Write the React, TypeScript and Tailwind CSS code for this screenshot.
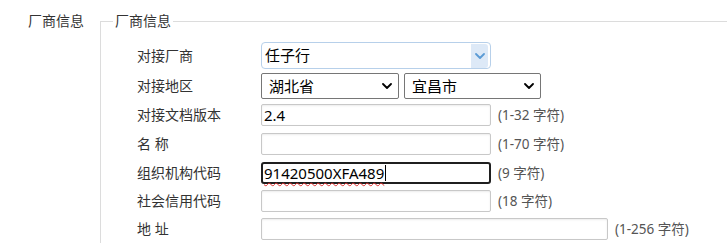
import type { PropsWithChildren } from "react";

const FONT = { fontFamily: '"Noto Sans", "Noto Sans CJK SC", sans-serif' };

function Chevron({ className }: { className?: string }) {
  return (
    <svg viewBox="0 0 10 6" className={className} fill="none">
      <path d="M1 1l4 4 4-4" stroke="currentColor" strokeWidth="1.8" strokeLinecap="round" strokeLinejoin="round" />
    </svg>
  );
}

function Row({ label, top, h, children }: PropsWithChildren<{ label: string; top: string; h: string }>) {
  return (
    <div className={`flex items-center ${top} ${h}`}>
      <div className="w-[160px] shrink-0 pl-[36px] text-[14px] leading-none text-[#333]">{label}</div>
      {children}
    </div>
  );
}

function TextInput({ value, width = "w-[230px]" }: { value?: string; width?: string }) {
  return (
    <div
      className={`flex h-full ${width} items-center rounded-[2px] border border-[#c8c8c8] px-[2px] text-[15px] text-black shadow-[inset_0_1px_2px_rgba(0,0,0,0.08)]`}
    >
      {value}
    </div>
  );
}

function Hint({ children }: PropsWithChildren) {
  return <span className="ml-[7px] text-[13.5px] text-[#555]">{children}</span>;
}

function NativeSelect({ value, width }: { value: string; width: string }) {
  return (
    <div
      className={`flex h-full ${width} items-center justify-between rounded-[2px] border border-[#767676] pl-[7px] pr-[6px] text-[15px] text-black`}
    >
      {value}
      <Chevron className="h-[6px] w-[10px] text-black" />
    </div>
  );
}

export default function App() {
  return (
    <div className="h-[243px] w-[727px] overflow-hidden bg-white" style={FONT}>
      <div className="flex pt-[14px]">
        <div className="w-[100px] shrink-0 pl-[28px] text-[14px] leading-[14px] text-[#333]">厂商信息</div>

        <div className="flex flex-1 flex-col">
          {/* legend line */}
          <div className="flex h-[14px] items-center">
            <div className="h-[7px] w-[13px] self-end border-l border-t border-[#dcdcdc]" />
            <span className="px-[2px] text-[14px] leading-none text-[#333]">厂商信息</span>
            <div className="flex-1 border-t border-[#dcdcdc]" />
          </div>

          <div className="flex flex-col border-l border-[#dcdcdc] pb-[10px]">
            <Row label="对接厂商" top="mt-[14px]" h="h-[27px]">
              <div className="flex h-full w-[230px] items-center rounded-[4px] border border-[#b7d0ea] pl-[3px] text-[15px] text-black">
                <span className="flex-1">任子行</span>
                <div className="mr-[2px] flex h-[24px] w-[17px] items-center justify-center rounded-r-[3px] bg-[#dde9f7]">
                  <Chevron className="h-[6px] w-[10px] text-[#5b9bd5]" />
                </div>
              </div>
            </Row>

            <Row label="对接地区" top="mt-[4px]" h="h-[26px]">
              <div className="flex h-full gap-[5px]">
                <NativeSelect value="湖北省" width="w-[138px]" />
                <NativeSelect value="宜昌市" width="w-[137px]" />
              </div>
            </Row>

            <Row label="对接文档版本" top="mt-[5px]" h="h-[22px]">
              <TextInput value="2.4" />
              <Hint>(1-32 字符)</Hint>
            </Row>

            <Row label="名 称" top="mt-[7px]" h="h-[22px]">
              <TextInput />
              <Hint>(1-70 字符)</Hint>
            </Row>

            <Row label="组织机构代码" top="mt-[7px]" h="h-[22px]">
              <div className="flex h-full w-[230px] items-center rounded-[3px] border-2 border-[#1f1f1f] px-[1px] text-[15px] text-black">
                <span className="underline decoration-[#e03030] decoration-wavy decoration-1 underline-offset-[3px]">
                  91420500XFA489
                </span>
                <span className="ml-[1px] h-[16px] w-px bg-black" />
              </div>
              <Hint>(9 字符)</Hint>
            </Row>

            <Row label="社会信用代码" top="mt-[6px]" h="h-[22px]">
              <TextInput />
              <Hint>(18 字符)</Hint>
            </Row>

            <Row label="地 址" top="mt-[6px]" h="h-[22px]">
              <TextInput width="w-[347px]" />
              <Hint>(1-256 字符)</Hint>
            </Row>
          </div>
        </div>
      </div>
    </div>
  );
}
